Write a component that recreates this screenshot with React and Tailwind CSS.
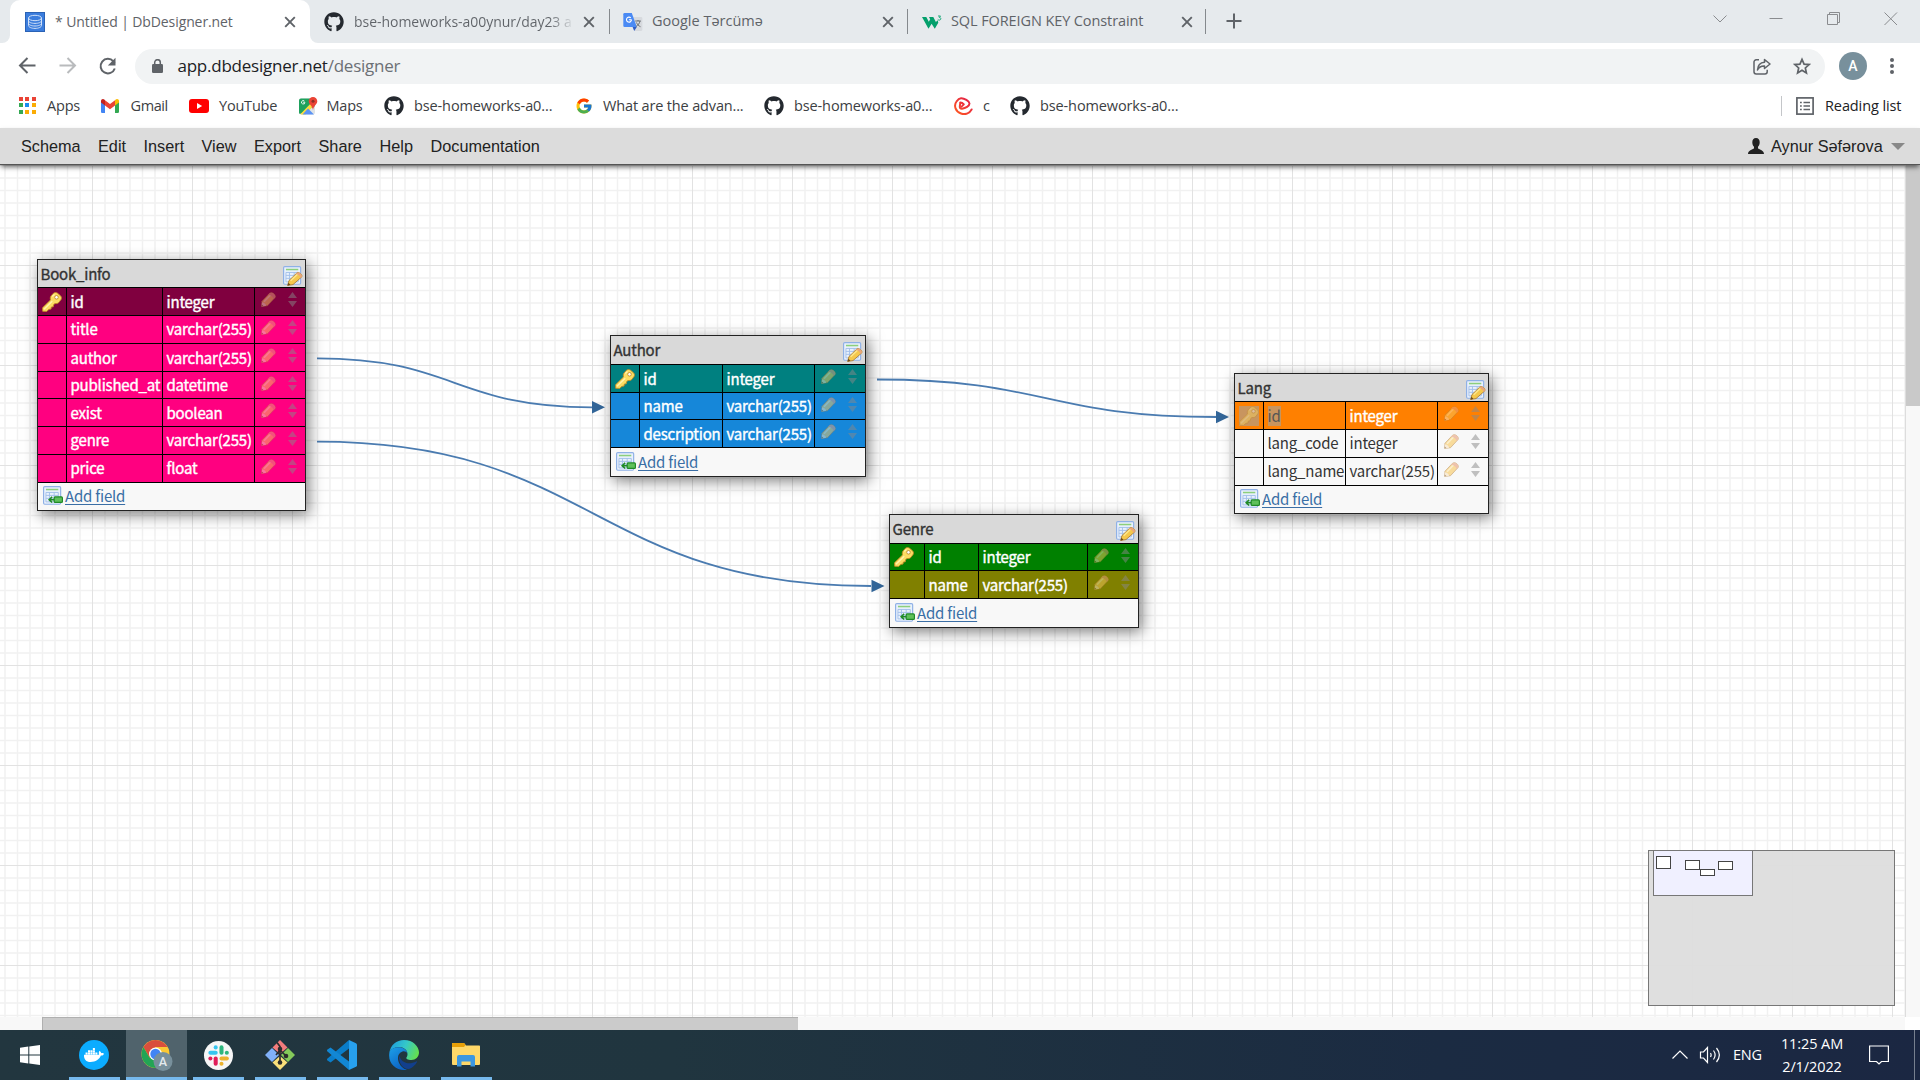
import React from "react";
import { FaGithub, FaDocker } from "react-icons/fa";
import { FcGoogle } from "react-icons/fc";

/* ---------- small icons ---------- */

const Close = ({ className = "" }) => (
  <svg viewBox="0 0 12 12" className={`h-3 w-3 shrink-0 ${className}`} fill="none" stroke="#5f6368" strokeWidth="1.9">
    <path d="M1.2 1.2l9.6 9.6M10.8 1.2l-9.6 9.6" />
  </svg>
);

const DbIcon = () => (
  <svg viewBox="0 0 20 20" className="h-5 w-5 shrink-0">
    <rect x="0.5" y="0.5" width="19" height="19" fill="#3b7ddd" stroke="#2a62b5" />
    <g fill="none" stroke="#cfe0f8" strokeWidth="1">
      <ellipse cx="10" cy="6" rx="6.5" ry="2.7" />
      <path d="M3.5 6v7.5c0 1.6 2.9 2.9 6.5 2.9s6.5-1.3 6.5-2.9V6M3.5 8.7c0 1.5 2.9 2.7 6.5 2.7s6.5-1.2 6.5-2.7M3.5 11.3c0 1.5 2.9 2.7 6.5 2.7s6.5-1.2 6.5-2.7" />
    </g>
  </svg>
);

const TranslateIcon = () => (
  <svg viewBox="0 0 20 20" className="h-5 w-5 shrink-0">
    <path d="M8 5h10a1.4 1.4 0 011.4 1.4v11.2A1.4 1.4 0 0118 19h-6.5z" fill="#d7dade" />
    <path d="M1.6 1h7.2l5 14H1.6A1.3 1.3 0 01.3 13.7V2.3A1.3 1.3 0 011.6 1z" fill="#4a8af4" />
    <path d="M9.6 15h4.2l-2.6 4z" fill="#2f5dc4" />
    <path d="M8.6 7.7H5.9M8.5 7.8a2.5 2.5 0 11-.7-1.9" fill="none" stroke="#fff" strokeWidth="1.1" />
    <path d="M12.2 9h5.6M15 8v1M17 9c-.5 2.5-2 4.3-4 5.5M13.5 10.5c.6 1.8 2.2 3.4 4 4.2" fill="none" stroke="#6b7176" strokeWidth="1" />
  </svg>
);

const W3Icon = () => (
  <svg viewBox="0 0 20 14" className="h-[14px] w-5 shrink-0">
    <path d="M0 2h4.300l2.500 4.800L8.200 4.300 7 2h4.300l2.600 5 1.800-1.700.6 2.500-3.500 5.900-3.200-5-3.100 5z" fill="#04a06c" />
    <path d="M16 1h2.500L17.300 2.500c1 0 1.500.5 1.500 1.200 0 .8-.6 1.400-1.500 1.400-.7 0-1.200-.3-1.500-.7" fill="none" stroke="#04a06c" strokeWidth=".9" />
  </svg>
);

const AppsIcon = () => {
  const colors = ["#ea4335", "#ea4335", "#ea4335", "#34a853", "#1a8cf0", "#fbac04", "#34a853", "#fbac04", "#fbac04"];
  return (
    <div className="grid h-[17px] w-[17px] grid-cols-3 gap-[2px]">
      {colors.map((c, i) => (
        <span key={i} className="h-[4px] w-[4px]" style={{ backgroundColor: c }} />
      ))}
    </div>
  );
};

const GmailIcon = () => (
  <svg viewBox="0 0 18 14" className="h-[14px] w-[18px]">
    <path d="M0 2.5v10A1.3 1.3 0 001.3 14H4V5z" fill="#4285f4" />
    <path d="M14 5v9h2.7A1.3 1.3 0 0018 12.7V2.5z" fill="#34a853" />
    <path d="M14 1.2V6.5l4-3V2c0-1.8-2-2.6-3.3-1.5z" fill="#fbbc04" />
    <path d="M4 6.5V1.2l5 3.8 5-3.8v5.3l-5 3.8z" fill="#ea4335" />
    <path d="M0 2v1.5l4 3V1.2L3.3.5C2-.6 0 .2 0 2z" fill="#c5221f" />
  </svg>
);

const YoutubeIcon = () => (
  <svg viewBox="0 0 20 14" className="h-[14px] w-5">
    <rect width="20" height="14" rx="3" fill="#f00" />
    <path d="M8 4v6l5.2-3z" fill="#fff" />
  </svg>
);

const MapsIcon = () => (
  <svg viewBox="0 0 19 18" className="h-[18px] w-[19px]">
    <rect x="0" y="1.5" width="16" height="16" rx="2" fill="#dfe3e6" />
    <path d="M0 3.5a2 2 0 012-2h9L16 9 1 17a2 2 0 01-1-1.5z" fill="#1fa15d" />
    <path d="M1.5 17l14-14.5.5 4.5L6.5 17.5H2z" fill="#fedc3d" />
    <path d="M3.5 17.5L9 11.5l6 6z" fill="#5b93f5" />
    <path d="M5.8 5.3H4.2M5.9 5.4a1.7 1.7 0 11-.5-1.3" fill="none" stroke="#fff" strokeWidth=".9" />
    <path d="M14 0a4.3 4.3 0 014.3 4.3c0 2.8-3.3 4-4.3 8.7-1-4.7-4.3-5.9-4.3-8.7A4.3 4.3 0 0114 0z" fill="#ea4335" />
    <circle cx="14" cy="4.3" r="1.5" fill="#8c2f24" />
  </svg>
);

const SwirlIcon = () => (
  <svg viewBox="0 0 19 18" className="h-[18px] w-[19px]" fill="none" strokeLinejoin="round" strokeLinecap="round">
    <defs>
      <linearGradient id="swirl" x1="0" y1="1" x2="1" y2="0">
        <stop offset="0" stopColor="#ff5a1f" />
        <stop offset="1" stopColor="#e01b4c" />
      </linearGradient>
    </defs>
    <path d="M17.600 12.500C15.500 16.500 11 17.800 7 16.500 1.500 14.800-.5 8.500 2.500 4.500 3.500 3 5 1.300 7 1.200c3-.2 8.500 3 8.500 5.300 0 2.500-4 4.800-7.500 5.200-1.800.1-2.300-.8-2.200-2.200l.5-3.500" stroke="url(#swirl)" strokeWidth="2" />
    <path d="M6.300 5.500c1.800 0 2.700.8 3.600 1.900L7.300 9.800" stroke="#ee3038" strokeWidth="1.8" />
  </svg>
);

/* ---------- browser chrome ---------- */

const uiFont = "font-['Open_Sans','Noto_Sans',sans-serif]";

function TabStrip() {
  return (
    <div className="flex h-[43px] bg-[#e6eaed]">
      <div className="flex w-[10px] bg-white">
        <div className="w-full rounded-br-[8px] bg-[#e6eaed]" />
      </div>
      <div className="flex w-[300px] items-center rounded-t-[10px] bg-white pl-[15px] pr-[14px]">
        <DbIcon />
        <span className="ml-[10px] flex-1 whitespace-nowrap pb-[1px] text-[14px] tracking-[-0.1px] text-[#5f6368]">* Untitled | DbDesigner.net</span>
        <Close />
      </div>
      <div className="flex w-[10px] bg-white">
        <div className="w-full rounded-bl-[8px] bg-[#e6eaed]" />
      </div>
      <div className="flex w-[289px] items-center pl-[4px]">
        <FaGithub className="h-5 w-5 shrink-0 text-[#24292f]" />
        <span className="ml-[10px] w-[222px] overflow-hidden whitespace-nowrap bg-[linear-gradient(to_right,#5f6368_195px,transparent_221px)] bg-clip-text pb-[1px] text-[14px] tracking-[-0.03px] text-transparent">
          bse-homeworks-a00ynur/day23 a
        </span>
        <Close className="ml-[7px]" />
      </div>
      <div className="mt-[9px] h-[25px] w-px bg-[#85898d]" />
      <div className="flex w-[297px] items-center pl-[13px]">
        <TranslateIcon />
        <span className="ml-[9px] w-[230px] whitespace-nowrap pb-[1px] text-[14.5px] text-[#5f6368]">Google Tərcümə</span>
        <Close />
      </div>
      <div className="mt-[9px] h-[25px] w-px bg-[#85898d]" />
      <div className="flex w-[297px] items-center pl-[14px]">
        <W3Icon />
        <span className="ml-[9px] w-[230px] whitespace-nowrap pb-[1px] text-[14.5px] tracking-[-0.1px] text-[#5f6368]">SQL FOREIGN KEY Constraint</span>
        <Close />
      </div>
      <div className="mt-[9px] h-[25px] w-px bg-[#85898d]" />
      <svg viewBox="0 0 16 16" className="ml-[20px] mt-[13px] h-4 w-4" stroke="#5f6368" strokeWidth="2">
        <path d="M8 .5v15M.5 8h15" />
      </svg>
      <div className="ml-auto flex items-start pr-[21px] pt-[11px]">
        <svg viewBox="0 0 192 16" className="h-4 w-[192px]" fill="none" stroke="#8a8c8f" strokeWidth="1">
          <path d="M6.500 4.500l6.500 6.500 6.500-6.500" />
          <path d="M62.500 7.500h13" />
          <path d="M120.500 3.500h10v10h-10zM122.500 3.500v-2h10v10h-2" />
          <path d="M177.500 1.500l12.500 12.500M190 1.500L177.500 14" />
        </svg>
      </div>
    </div>
  );
}

function Toolbar() {
  return (
    <div className="flex h-[45px] items-center bg-white pt-[1px]">
      <svg viewBox="0 0 120 20" className="ml-[9px] h-5 w-[120px] shrink-0" fill="none" strokeWidth="2">
        <path d="M26.500 9.500H11.500M18.500 2L11 9.500l7.500 7.500" stroke="#5f6368" />
        <path d="M50.500 9.500H66M58.500 2l7.500 7.500-7.500 7.500" stroke="#b9bbbd" />
        <path d="M105.800 12.500a7.300 7.300 0 11-1.400-7.200l1.300 1.500" stroke="#5f6368" />
        <path d="M106.500 1.800v7.700h-7.700z" fill="#5f6368" />
      </svg>
      <div className="ml-[6px] flex h-[35px] w-[1690px] shrink-0 items-center rounded-full bg-[#f1f3f4] pl-[17px] pr-[14px]">
        <svg viewBox="0 0 11 14" className="h-[14px] w-[11px]">
          <rect y="5" width="11" height="9" rx="1.2" fill="#5f6368" />
          <path d="M2.700 6V3.500a2.800 2.800 0 015.600 0V6" fill="none" stroke="#5f6368" strokeWidth="1.5" />
        </svg>
        <span className="ml-[14.5px] flex-1 whitespace-nowrap pb-[1px] text-[17px] tracking-[-0.24px] text-[#202124]">
          app.dbdesigner.net<span className="text-[#6c7075]">/designer</span>
        </span>
        <svg viewBox="0 0 18 17" className="h-[17px] w-[18px]" fill="none" stroke="#5f6368" strokeWidth="1.5" strokeLinejoin="round">
          <path d="M6 1.800H3.200A2.200 2.200 0 001 4v9.800A2.200 2.200 0 003.200 16H12a2.200 2.200 0 002.200-2.200v-2" />
          <path d="M11.500 1.500L17 6l-5.500 4.500V8C8.500 7.800 6 9 4.500 12c.2-4.500 3-7.500 7-7.800z" />
        </svg>
        <svg viewBox="0 0 20 19" className="ml-[22px] h-[18px] w-[18px]" fill="none" stroke="#5f6368" strokeWidth="1.9">
          <path d="M10 2.200l2.300 5.200 5.600.5-4.200 3.800 1.200 5.500L10 14.300l-4.900 2.900 1.200-5.500L2.100 7.900l5.600-.5z" />
        </svg>
      </div>
      <div className="ml-[14px] flex h-7 w-7 shrink-0 items-center justify-center rounded-full bg-[#78909c] font-[Roboto,sans-serif] text-[14px] font-medium text-white">A</div>
      <svg viewBox="0 0 4 16" className="ml-[23px] h-4 w-1" fill="#5f6368">
        <circle cx="2" cy="2" r="2" />
        <circle cx="2" cy="8" r="2" />
        <circle cx="2" cy="14" r="2" />
      </svg>
    </div>
  );
}

const gh = <FaGithub className="h-5 w-5 text-[#24292f]" />;

const bookmarks = [
  { icon: <AppsIcon />, label: "Apps", item: "w-[82px]", slot: "w-[28px]", text: "tracking-[-0.2px]" },
  { icon: <GmailIcon />, label: "Gmail", item: "w-[88px]", slot: "w-[29.5px]", text: "tracking-[-0.4px]" },
  { icon: <YoutubeIcon />, label: "YouTube", item: "w-[109.5px]", slot: "w-[30px]", text: "tracking-[-0.2px]" },
  { icon: <MapsIcon />, label: "Maps", item: "w-[85.5px]", slot: "w-[28px]", text: "tracking-[-0.2px]" },
  { icon: gh, label: "bse-homeworks-a0...", item: "w-[191px]", slot: "w-[30px]", text: "tracking-[-0.12px]" },
  { icon: <FcGoogle className="h-[18px] w-[18px]" />, label: "What are the advan...", item: "w-[189px]", slot: "w-[28px]", text: "tracking-[-0.15px]" },
  { icon: gh, label: "bse-homeworks-a0...", item: "w-[190px]", slot: "w-[30px]", text: "tracking-[-0.12px]" },
  { icon: <SwirlIcon />, label: "c", item: "w-[56px]", slot: "w-[29px]", text: "" },
  { icon: gh, label: "bse-homeworks-a0...", item: "w-[190px]", slot: "w-[30px]", text: "tracking-[-0.12px]" },
];

function Bookmarks() {
  return (
    <div className="flex h-10 items-center bg-white pb-[5px] pl-[19px] text-[14.5px] text-[#3c4043]">
      {bookmarks.map((b, i) => (
        <div key={i} className={`flex shrink-0 items-center whitespace-nowrap ${b.item}`}>
          <span className={`flex shrink-0 ${b.slot}`}>{b.icon}</span>
          <span className={b.text}>{b.label}</span>
        </div>
      ))}
      <div className="ml-auto flex items-center pr-[18px]">
        <div className="h-5 w-px bg-[#c4c6c9]" />
        <svg viewBox="0 0 18 18" className="ml-[14px] h-[18px] w-[18px]" fill="none" stroke="#5f6368">
          <rect x=".9" y=".9" width="16.2" height="16.2" strokeWidth="1.7" />
          <path d="M4 5.500h1.800M4 9h1.800M4 12.500h1.800M7.500 5.500H14M7.500 9H14M7.500 12.500H14" strokeWidth="1.5" />
        </svg>
        <span className="ml-[11px] w-[77px] whitespace-nowrap tracking-[-0.1px] text-[#202124]">Reading list</span>
      </div>
    </div>
  );
}

/* ---------- application ---------- */

const menu = [
  ["Schema", "w-[77px]"],
  ["Edit", "w-[45.5px]"],
  ["Insert", "w-[58px]"],
  ["View", "w-[52.5px]"],
  ["Export", "w-[64.5px]"],
  ["Share", "w-[61px]"],
  ["Help", "w-[51px]"],
  ["Documentation", "w-[120px]"],
];

function MenuBar() {
  return (
    <div className="relative z-10 flex h-[37px] items-center border-b border-[#555] bg-[#dcdcdc] pl-[21px] pr-[15px] font-['Liberation_Sans',Arial,sans-serif] text-[16.25px] text-[#222] shadow-[0_3px_5px_-1px_rgba(0,0,0,0.6)]">
      {menu.map(([label, w]) => (
        <span key={label} className={`whitespace-nowrap ${w}`}>{label}</span>
      ))}
      <svg viewBox="0 0 16 16" className="ml-auto h-4 w-4" fill="#222">
        <path d="M8 0c2.500 0 3.700 1.700 3.700 4.200 0 2-.8 3.600-1.700 4.600v1.600c1.500 1 6 1.800 6 5.600H0c0-3.800 4.500-4.600 6-5.600V8.800C5.100 7.800 4.300 6.200 4.300 4.200 4.300 1.700 5.500 0 8 0z" />
      </svg>
      <span className="ml-[7px] w-[120px] whitespace-nowrap">Aynur Səfərova</span>
      <svg viewBox="0 0 14 7" className="h-[7px] w-[14px]" fill="#888">
        <path d="M0 0h14L7 7z" />
      </svg>
    </div>
  );
}

const TableGlyph = () => (
  <>
    <rect x=".5" y=".5" width="14.5" height="15" rx="1" fill="#e9f1fc" stroke="#8fb1e6" />
    <path d="M2.500 3h10.500" stroke="#8ccf7c" strokeWidth="1.3" />
    <path d="M2.500 5.500H13v8H2.500zM2.500 8H13M2.500 10.500H13M5.500 5.500v8M9.500 5.500v8" fill="none" stroke="#a3c0ea" strokeWidth=".8" />
  </>
);

const TableEdit = () => (
  <svg viewBox="0 0 17 17" className="mt-[4px] h-5 w-5">
    <TableGlyph />
    <path d="M4 16.500l1-4 7-6.800c1.300-1 4.900 1.800 4 3.500l-7.500 6.600z" fill="#f5c84c" stroke="#a9772b" strokeWidth=".7" />
    <path d="M6.500 12.500l6-5.700" stroke="#fce68d" strokeWidth="1.3" />
    <path d="M12 5.700c1.300-1 4.900 1.800 4 3.500l-1.200 1.100c-.3-1.800-2-3.200-4-3.400z" fill="#eaa67a" />
    <path d="M3.800 16.700l.8-2.500 1.700 1.800z" fill="#6b4a1c" />
  </svg>
);

const TableInsert = () => (
  <svg viewBox="0 0 17 17" className="h-5 w-5 shrink-0">
    <TableGlyph />
    <rect x="9.500" y="9.300" width="7" height="4.600" rx=".8" fill="#5fc05a" stroke="#1f8a26" />
    <path d="M9.500 11.600h-4M7.800 9.200L5.200 11.600l2.600 2.400" fill="none" stroke="#1f8a26" strokeWidth="1.3" />
  </svg>
);

const KeyIcon = () => (
  <svg viewBox="0 0 20 20" className="h-5 w-5">
    <path d="M11.500 1.200C12.800.3 14 .3 15.300 1l3.200 2.800c1 1.100 1.200 2.300.7 3.500l-2.400 3.200c-1 1-2.300 1.300-3.800 1l-1.500 1.300-.2 2-2 .3-.3 2-2 .2L4.600 19.400l-3.900-.1-.2-3.500 8-7.800c-.4-1.500-.3-2.800.5-4z" fill="#fbdc63" stroke="#c28a26" strokeWidth=".9" />
    <path d="M2 17.300l8.300-8M10.300 4.500l2.200-2" stroke="#fff3b0" strokeWidth="1.2" />
    <circle cx="14.500" cy="5.300" r="1.8" fill="#fff" stroke="#b98426" strokeWidth=".8" />
  </svg>
);

const Pencil = () => (
  <svg viewBox="0 0 15 15" className="h-[15px] w-[15px]">
    <path d="M.6 14.400l.4-5.200L8.500 1.300C11-.8 15.600 3 14 5.600L6.500 13.700z" fill="#f9c95e" stroke="#b3803f" strokeWidth=".8" />
    <path d="M3 9.800l7.300-7.600" stroke="#fde9b0" strokeWidth="1.6" />
    <path d="M8.500 1.300C11-.8 15.600 3 14 5.600l-1.500 1.600C12.300 5 10 3 7 3z" fill="#e9a07c" />
    <path d="M.6 14.400l.4-4.200c2.200.3 3.700 1.700 4.200 3.500z" fill="#f8e3c0" />
    <path d="M.5 14.500l.2-2 1.700 1.500z" fill="#7a5a30" />
  </svg>
);

const Sorter = () => (
  <svg viewBox="0 0 9 15" className="h-[15px] w-[9px]" fill="#888">
    <path d="M0 6l4.500-6L9 6zM0 9h9l-4.500 6z" />
  </svg>
);

const tables = [
  {
    name: "Book_info",
    box: "left-[37px] top-[94px] w-[269px]",
    head: "h-[27px]",
    cols: ["w-[28px]", "w-[96px]", "w-[92px]"],
    foot: "h-[28px] pb-[1px]",
    rows: [
      { n: "id", t: "integer", h: "h-[28px]", bg: "bg-[#80003f]", key: true },
      { n: "title", t: "varchar(255)", h: "h-[28px]", bg: "bg-[#ff0080]", up: true },
      { n: "author", t: "varchar(255)", h: "h-[28px]", bg: "bg-[#ff0080]" },
      { n: "published_at", t: "datetime", h: "h-[27px]", bg: "bg-[#ff0080]" },
      { n: "exist", t: "boolean", h: "h-[28px]", bg: "bg-[#ff0080]" },
      { n: "genre", t: "varchar(255)", h: "h-[28px]", bg: "bg-[#ff0080]", up: true },
      { n: "price", t: "float", h: "h-[28px]", bg: "bg-[#ff0080]", up: true },
    ],
  },
  {
    name: "Author",
    box: "left-[610px] top-[170px] w-[256px]",
    head: "h-[28px]",
    cols: ["w-[28px]", "w-[83px]", "w-[92px]"],
    foot: "h-[29px]",
    rows: [
      { n: "id", t: "integer", h: "h-[28px]", bg: "bg-[#008080]", key: true },
      { n: "name", t: "varchar(255)", h: "h-[27px]", bg: "bg-[#1687d9]" },
      { n: "description", t: "varchar(255)", h: "h-[28px]", bg: "bg-[#1687d9]" },
    ],
  },
  {
    name: "Genre",
    box: "left-[889px] top-[349px] w-[250px]",
    head: "h-[28px]",
    cols: ["w-[34px]", "w-[54px]", "w-[109px]"],
    foot: "h-[29px]",
    rows: [
      { n: "id", t: "integer", h: "h-[27px]", bg: "bg-[#008000]", key: true },
      { n: "name", t: "varchar(255)", h: "h-[28px]", bg: "bg-[#808000]" },
    ],
  },
  {
    name: "Lang",
    box: "left-[1234px] top-[208px] w-[255px]",
    head: "h-[27px]",
    cols: ["w-[28px]", "w-[82px]", "w-[92px]"],
    foot: "h-[28px] pb-[1px]",
    rows: [
      { n: "id", t: "integer", h: "h-[28px]", bg: "bg-[#ff8000]", key: true, selected: true },
      { n: "lang_code", t: "integer", h: "h-[28px]", bg: "bg-[#f8f8f8]", plain: true, up: true },
      { n: "lang_name", t: "varchar(255)", h: "h-[28px]", bg: "bg-[#f8f8f8]", plain: true, up: true },
    ],
  },
];

function DbTable({ t }) {
  return (
    <div className={`absolute flex flex-col border border-[#222] bg-[#f8f8f8] text-[15px] leading-[24px] tracking-[-0.2px] shadow-[3px_4px_14px_rgba(0,0,0,0.5)] ${t.box}`}>
      <div className={`flex items-center justify-between bg-[#d9d9d9] pl-[2.5px] pr-[2px] text-[#333] ${t.head}`}>
        <span className="[-webkit-text-stroke:0.35px_#333]">{t.name}</span>
        <TableEdit />
      </div>
      {t.rows.map((r) => (
        <div key={r.n} className={`flex border-t border-black ${r.h} ${r.bg} ${r.plain ? "text-[#333]" : "text-white [-webkit-text-stroke:0.4px_currentColor]"}`}>
          <div className={`flex shrink-0 items-center pl-[4px] ${t.cols[0]}`}>
            {r.key && (
              <span className={r.selected ? "bg-[#c8955f] [&>svg]:opacity-40" : ""}>
                <KeyIcon />
              </span>
            )}
          </div>
          <div className={`flex shrink-0 items-center whitespace-nowrap border-l border-black pl-[3.5px] ${r.up ? "pb-[2px]" : ""} ${t.cols[1]}`}>
            <span className={r.selected ? "bg-[#c8955f] leading-[20px] text-[#555] [-webkit-text-stroke:0]" : ""}>{r.n}</span>
          </div>
          <div className={`flex shrink-0 items-center whitespace-nowrap border-l border-black pl-[3.5px] ${r.up ? "pb-[2px]" : ""} ${t.cols[2]}`}>{r.t}</div>
          <div className="flex flex-1 items-start border-l border-black pl-[6px] pt-[4px]">
            <span className={r.plain ? "opacity-60" : "opacity-50"}><Pencil /></span>
            <span className="ml-[12px] opacity-50"><Sorter /></span>
          </div>
        </div>
      ))}
      <div className={`flex items-center border-t border-black pl-[5px] ${t.foot}`}>
        <TableInsert />
        <span className="ml-[2px] text-[#3a6ea5] underline underline-offset-2">Add field</span>
      </div>
    </div>
  );
}

const GRID = [1, 2, 3, 4, 5, 6, 7];

function Canvas() {
  return (
    <div className="relative w-[1905px] overflow-hidden bg-white font-['Noto_Sans_CJK_SC',sans-serif]">
      <svg className="absolute inset-0 h-full w-full" fill="none">
        <defs>
          <pattern id="grid" width="100" height="100" x="92" y="0" patternUnits="userSpaceOnUse">
            {GRID.map((k) => (
              <path key={k} d={`M${k * 12.5 + 0.5} 0V100M0 ${k * 12.5 + 0.5}H100`} stroke="#f1f1f1" strokeWidth="1.5" />
            ))}
            <path d="M.5 0V100M0 .5H100" stroke="#e2e2e2" strokeWidth="1" />
          </pattern>
        </defs>
        <rect width="1905" height="852" fill="url(#grid)" />
        <g stroke="#4a7bb0" strokeWidth="1.8">
          <path d="M317 193.300C454.500 193.300 454.500 242.300 592 242.300" />
          <path d="M317 276.700C594 276.700 594 421 871 421" />
          <path d="M877 214.500C1046 214.500 1046 252 1216 252" />
        </g>
        <g fill="#336699">
          <path d="M592 236l13 6.300-13 6.300z" />
          <path d="M871.500 414.700l13 6.300-13 6.300z" />
          <path d="M1216 245.700l13 6.300-13 6.300z" />
        </g>
      </svg>
      {tables.map((t) => (
        <DbTable key={t.name} t={t} />
      ))}
      <div className="absolute left-[1648px] top-[685px] h-[156px] w-[247px] border border-[#777] bg-[#ddddddf0]">
        <div className="absolute left-[4px] top-[-1px] h-[46px] w-[100px] border border-[#777] bg-[#f0f0ff]" />
        <div className="absolute left-[7px] top-[5px] h-[13px] w-[15px] border border-[#444] bg-white" />
        <div className="absolute left-[36px] top-[9px] h-[10px] w-[15px] border border-[#444] bg-white" />
        <div className="absolute left-[51px] top-[18px] h-[7px] w-[15px] border border-[#444] bg-white" />
        <div className="absolute left-[69px] top-[10px] h-[9px] w-[15px] border border-[#444] bg-white" />
      </div>
    </div>
  );
}

/* ---------- taskbar ---------- */

const ChromeIcon = () => (
  <svg viewBox="0 0 32 32" className="h-8 w-8">
    <circle cx="14.500" cy="15" r="14" fill="#fcc934" />
    <path d="M2.400 8A14 14 0 0126.600 8H14.500L8.500 18.500z" fill="#d94f3d" />
    <path d="M2.400 8A14 14 0 0014.500 29l6-10.500H8.500z" fill="#23a455" />
    <circle cx="14.500" cy="15" r="6.500" fill="#fff" />
    <circle cx="14.500" cy="15" r="5.200" fill="#4285f4" />
    <circle cx="22" cy="22.500" r="9.500" fill="#78909c" />
    <text x="22" y="27" textAnchor="middle" fontSize="12.5" fontFamily="Roboto, sans-serif" fontWeight="500" fill="#e4eaee">A</text>
  </svg>
);

const SlackIcon = () => (
  <svg viewBox="0 0 30 30" className="h-[29px] w-[29px]">
    <circle cx="15" cy="15" r="15" fill="#f6f6f6" />
    <rect x="10" y="4.500" width="4.2" height="4.2" rx="2.1" fill="#36c5f0" />
    <rect x="4.500" y="10" width="9.7" height="4.2" rx="2.1" fill="#36c5f0" />
    <rect x="16" y="4.500" width="4.2" height="9.7" rx="2.1" fill="#2eb67d" />
    <rect x="21.500" y="10" width="4.2" height="4.2" rx="2.1" fill="#2eb67d" />
    <rect x="16" y="16" width="9.7" height="4.2" rx="2.1" fill="#ecb22e" />
    <rect x="16" y="21.500" width="4.2" height="4.2" rx="2.1" fill="#ecb22e" />
    <rect x="10" y="16" width="4.2" height="9.7" rx="2.1" fill="#e01e5a" />
    <rect x="4.500" y="16" width="4.2" height="4.2" rx="2.1" fill="#e01e5a" />
  </svg>
);

const GitIcon = () => (
  <svg viewBox="0 0 30 30" className="h-[30px] w-[30px]">
    <path d="M15 0l7.500 7.500L15 14 7.500 7.500z" fill="#f47c7c" />
    <path d="M7 8l7 7-7 7-7-7z" fill="#80b0f8" />
    <path d="M23 8l7 7-7 7-7-7z" fill="#85c95a" />
    <path d="M15 16l7.500 6.500L15 30l-7.500-7.500z" fill="#fae07a" />
    <path d="M12 2.500l3 4V23M15 10l6 6M15 10l-4 5" fill="none" stroke="#2c2c2c" strokeWidth="1.7" />
    <circle cx="15" cy="9" r="2.3" fill="#2c2c2c" />
    <circle cx="21" cy="16" r="2.3" fill="#2c2c2c" />
    <circle cx="15" cy="22.500" r="2.3" fill="#2c2c2c" />
  </svg>
);

const CodeIcon = () => (
  <svg viewBox="0 0 30 30" className="h-[30px] w-[30px]">
    <path d="M22 0v8.500L3.500 22.500 0.500 20.500c-.7-.5-.7-1.500 0-2z" fill="#0a7dc9" />
    <path d="M22 30v-8.500L3.500 7.500l-3 2c-.7.5-.7 1.500 0 2z" fill="#1287d4" />
    <path d="M22 0l7 3.200c.6.3 1 .9 1 1.600v20.400c0 .7-.4 1.300-1 1.600L22 30z" fill="#27a0ee" />
  </svg>
);

const EdgeIcon = () => (
  <svg viewBox="0 0 30 30" className="h-[30px] w-[30px]">
    <defs>
      <linearGradient id="eTop" x1="0" y1=".3" x2="1" y2=".6">
        <stop offset="0" stopColor="#1d9de0" />
        <stop offset=".5" stopColor="#35c8c8" />
        <stop offset="1" stopColor="#66e04c" />
      </linearGradient>
      <linearGradient id="eLeft" x1="0" y1="0" x2=".6" y2="1">
        <stop offset="0" stopColor="#1ca0e8" />
        <stop offset="1" stopColor="#0c62c4" />
      </linearGradient>
    </defs>
    <path d="M.3 13C1.500 5 7.500 0 15 0c9 0 15 6.500 15 12.500 0 4.500-3.500 7.500-7.500 7.500-4 0-5.500-1.500-5.200-2.300.4-.7 1.200-1.500 1.200-3.500C18.500 10 14.500 7 10 7 5.500 7 1.500 9.500.3 13z" fill="url(#eTop)" />
    <path d="M.2 14C.5 9.500 5 7.300 9.500 7.300c4.700 0 8.500 2.700 9 6.200-1-1.700-3-2.500-5-2-4 1-5.500 5.500-4 10 1.300 4 4.500 7.500 8.500 8.200C9 31.500-.8 25 .2 14z" fill="url(#eLeft)" />
    <path d="M10.500 15.500C8.500 22 14 29.500 20 29c3-1 6.500-4 8-7 .2-.6-.3-.8-.8-.5-7.500 4-15.700 1-16.700-6z" fill="#123f8c" />
  </svg>
);

const FolderIcon = () => (
  <svg viewBox="0 0 28 24" className="h-6 w-7">
    <path d="M0 1.200C0 .5.5 0 1.200 0H12l2 2.500H27c.6 0 1 .4 1 1V21a1 1 0 01-1 1H1a1 1 0 01-1-1z" fill="#ffd868" />
    <path d="M0 1.200C0 .5.5 0 1.200 0H12l1.500 2-1.500 2H0z" fill="#e8a008" />
    <path d="M5 23.500V14a2 2 0 012-2h14a2 2 0 012 2v9.500h-4.500V18.500h-9v5z" fill="#3c97e0" />
  </svg>
);

const apps = [
  <span className="flex h-[30px] w-[30px] items-center justify-center rounded-full bg-[#0bacff]"><FaDocker className="h-5 w-5 text-white" /></span>,
  <ChromeIcon />,
  <SlackIcon />,
  <GitIcon />,
  <CodeIcon />,
  <EdgeIcon />,
  <FolderIcon />,
];

function Taskbar() {
  return (
    <div className="flex h-[50px] bg-[linear-gradient(to_right,#22363f_0%,#20353f_35%,#1b2b42_75%,#1b2742_100%)] text-white">
      <div className="flex w-[63px] items-center pl-5">
        <svg viewBox="0 0 20 20" className="h-5 w-5" fill="#fff">
          <path d="M0 2.700l8.300-1.200v8H0zM9.300 1.400L20 0v9.500H9.300zM0 10.500h8.300v8L0 17.300zM9.300 10.500H20V20L9.300 18.600z" />
        </svg>
      </div>
      {apps.map((icon, i) => (
        <div key={i} className={`flex flex-col items-center ${i === 1 ? "ml-px w-[61px] bg-[#50636c]" : "w-[62px]"}`}>
          <div className="flex h-[47px] items-center pt-[3px]">{icon}</div>
          <div className={`h-[3px] bg-[#76b9ed] ${i === 1 ? "w-full" : "w-[51px]"}`} />
        </div>
      ))}
      <div className="ml-auto flex items-center">
        <svg viewBox="0 0 52 18" className="h-[18px] w-[52px]" fill="none" stroke="#fff" strokeWidth="1.2">
          <path d="M2.500 12.500L10 5l7.500 7.500" />
          <path d="M30.500 6h3l4-4.500v15l-4-4.500h-3z" />
          <path d="M40.500 7c.8 1.300.8 2.700 0 4M43.500 4.500c2 2.800 2 6.200 0 9M46.500 2c3.500 4.300 3.500 9.700 0 14" />
        </svg>
        <span className="ml-[11px] w-[30px] whitespace-nowrap text-[14.5px] tracking-[-0.2px]">ENG</span>
        <div className="ml-[13px] w-[72px] whitespace-nowrap text-center text-[14.5px] leading-[23px] tracking-[-0.1px]">
          <div>11:25 AM</div>
          <div>2/1/2022</div>
        </div>
        <svg viewBox="0 0 20 20" className="ml-[21px] h-5 w-5" fill="none" stroke="#fff" strokeWidth="1.2">
          <path d="M.6 1h18.800v15.500H12.500L10 19l-2.500-2.500H.6z" />
        </svg>
        <div className="ml-[25px] mr-[5px] h-[50px] w-px bg-[#77808f]" />
      </div>
    </div>
  );
}

export default function App() {
  return (
    <div className={`flex h-[1080px] w-[1920px] flex-col overflow-hidden bg-white ${uiFont}`}>
      <TabStrip />
      <Toolbar />
      <Bookmarks />
      <MenuBar />
      <div className="flex h-[852px]">
        <Canvas />
        <div className="w-[15px] border-l border-[#ddd] bg-[#f8f8f8]">
          <div className="h-[241px] bg-[#c9c9c9]" />
        </div>
      </div>
      <div className="flex h-[13px]">
        <div className="w-[1905px] bg-[#f8f8f8] pl-[42px]">
          <div className="h-full w-[756px] border-l border-t border-[#b0b0b0] bg-[#cbcbcb]" />
        </div>
      </div>
      <Taskbar />
    </div>
  );
}
